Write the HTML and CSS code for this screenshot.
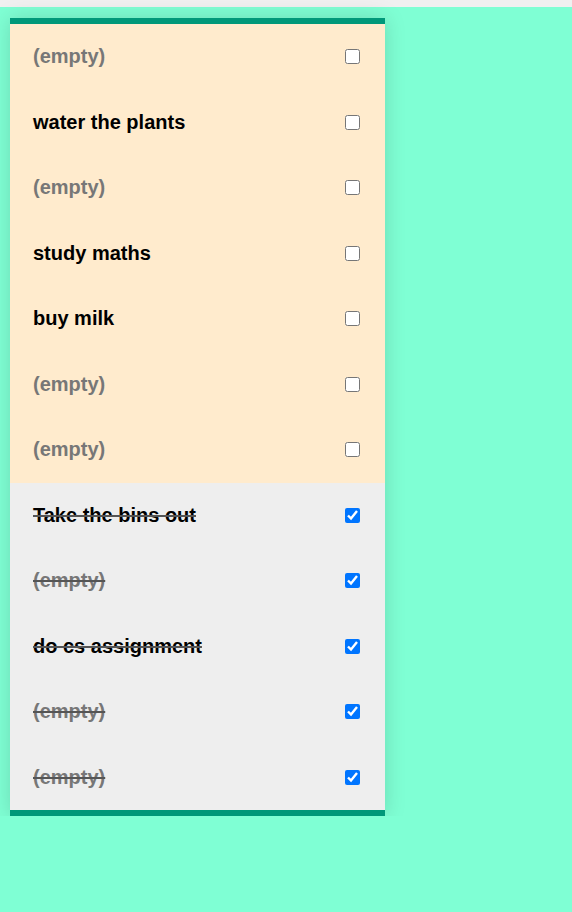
FILE: index.html
```html
<!DOCTYPE html>
<html lang="en">
<head>
  <meta charset="UTF-8" />
  <title>Todo list</title>
  <link rel="stylesheet" href="styles.css">
</head>
<body>
  <div class="topbar"></div>
  <ul class="todos">
    <li class="todo empty"><span>(empty)</span><input type="checkbox" /></li>
    <li class="todo"><span>water the plants</span><input type="checkbox" /></li>
    <li class="todo empty"><span>(empty)</span><input type="checkbox" /></li>
    <li class="todo"><span>study maths</span><input type="checkbox" /></li>
    <li class="todo"><span>buy milk</span><input type="checkbox" /></li>
    <li class="todo empty"><span>(empty)</span><input type="checkbox" /></li>
    <li class="todo empty"><span>(empty)</span><input type="checkbox" /></li>
    <li class="todo done"><span>Take the bins out</span><input type="checkbox" checked /></li>
    <li class="todo done empty"><span>(empty)</span><input type="checkbox" checked /></li>
    <li class="todo done"><span>do cs assignment</span><input type="checkbox" checked /></li>
    <li class="todo done empty"><span>(empty)</span><input type="checkbox" checked /></li>
    <li class="todo done empty"><span>(empty)</span><input type="checkbox" checked /></li>
  </ul>
</body>
</html>
```

FILE: styles.css
```css
body {
  font-family: Arial, "Liberation Sans", sans-serif;
  background-color: #7fffd4;
  margin: 0;
  padding: 0;
}

.topbar {
  height: 7px;
  background-color: #f0f0f0;
}

.todos {
  list-style: none;
  margin: 11px 0 0 10px;
  padding: 0;
  width: 375px;
  border-top: 6px solid #009879;
  border-bottom: 6px solid #009879;
  box-shadow: 0 0 20px rgba(0, 0, 0, 0.15);
}

.todo {
  display: flex;
  justify-content: space-between;
  align-items: center;
  height: 65.5px;
  box-sizing: border-box;
  padding: 0 25px 0 23px;
  background-color: #ffebcd;
  font-size: 20px;
  font-weight: bold;
  color: #000;
}

.todo input {
  margin: 0;
  width: 15px;
  height: 15px;
}

.empty {
  color: #777;
}

.done {
  background-color: #eeeeee;
}

.done span {
  text-decoration: line-through;
  text-decoration-color: #555;
}
```
